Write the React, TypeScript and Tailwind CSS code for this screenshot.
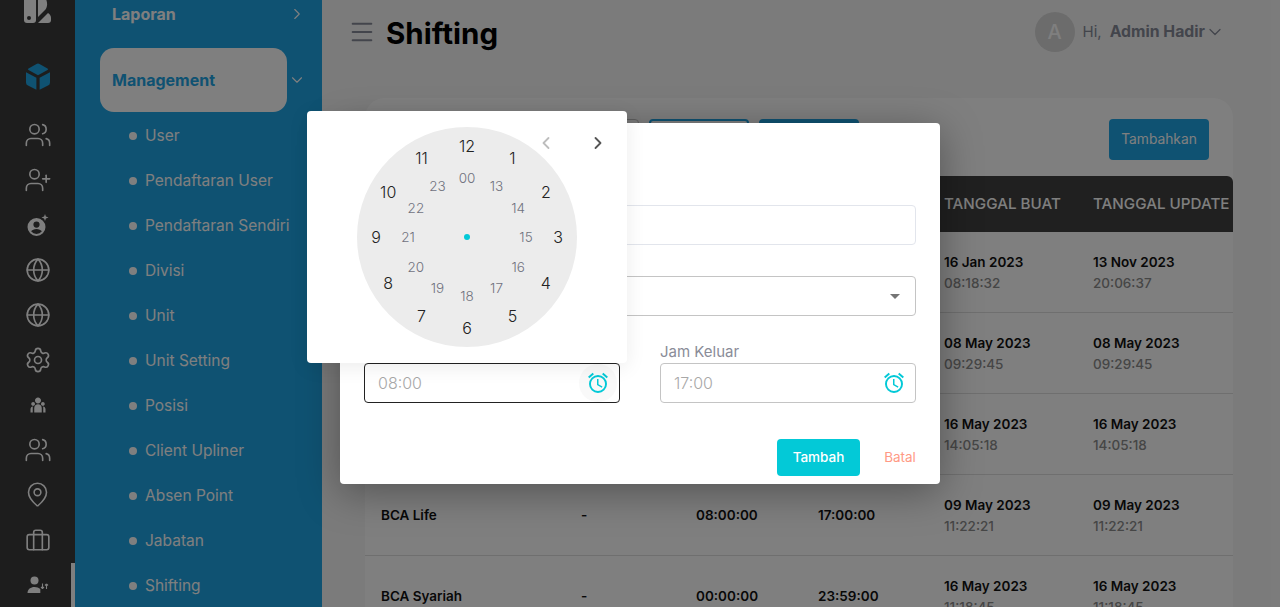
import React from "react";
import { ChevronRight, ChevronDown, ChevronLeft, Users, UserPlus, Globe, Settings, MapPin, Menu } from "lucide-react";
import { RiTeamFill } from "react-icons/ri";
import { MdOutlineAlarm } from "react-icons/md";

const FONT = "font-['Inter','Liberation_Sans',sans-serif]";

const subMenu = ["User", "Pendaftaran User", "Pendaftaran Sendiri", "Divisi", "Unit", "Unit Setting", "Posisi", "Client Upliner", "Absen Point", "Jabatan", "Shifting"];

type Row = { name: string; shift: string; masuk: string; keluar: string; buat: string[]; update: string[] };

const rows: Row[] = [
  { name: "", shift: "", masuk: "", keluar: "", buat: ["16 Jan 2023", "08:18:32"], update: ["13 Nov 2023", "20:06:37"] },
  { name: "", shift: "", masuk: "", keluar: "", buat: ["08 May 2023", "09:29:45"], update: ["08 May 2023", "09:29:45"] },
  { name: "", shift: "", masuk: "", keluar: "", buat: ["16 May 2023", "14:05:18"], update: ["16 May 2023", "14:05:18"] },
  { name: "BCA Life", shift: "-", masuk: "08:00:00", keluar: "17:00:00", buat: ["09 May 2023", "11:22:21"], update: ["09 May 2023", "11:22:21"] },
  { name: "BCA Syariah", shift: "-", masuk: "00:00:00", keluar: "23:59:00", buat: ["16 May 2023", "11:18:45"], update: ["16 May 2023", "11:18:45"] },
];

function Logo() {
  return (
    <svg width="28" height="25" viewBox="0 0 28 25" fill="#ffffff">
      <path d="M0 0h12v21a3 3 0 0 1-3 3H3a3 3 0 0 1-3-3z" />
      <circle cx="5" cy="19" r="2" fill="#3a3a3a" />
      <path d="M14 0l8 0c2 5 1 9-1 11l-7 7z" />
      <path d="M24 14c2 1 3 3 3 5v2a3 3 0 0 1-3 3H14z" />
    </svg>
  );
}

function Cube() {
  return (
    <svg width="26" height="28" viewBox="0 0 26 28" fill="#1ea4e4">
      <path d="M11.5 1a3 3 0 0 1 3 0l8 4.4a1 1 0 0 1 0 1.7L13 12.2 3.5 7.1a1 1 0 0 1 0-1.7z" />
      <path d="M1 9.3l10.4 5.5v12L3 22.6a3.5 3.5 0 0 1-2-3.2z" />
      <path d="M25 9.3L14.6 14.8v12l8.4-4.2a3.5 3.5 0 0 0 2-3.2z" />
    </svg>
  );
}

function UserSpark() {
  return (
    <svg width="24" height="24" viewBox="0 0 24 24" fill="#ffffff">
      <path fillRule="evenodd" d="M10.5 5a9 9 0 1 0 0 18 9 9 0 0 0 0-18zm0 3.5a3.1 3.1 0 1 1 0 6.2 3.1 3.1 0 0 1 0-6.2zm0 12.4a6.9 6.9 0 0 1-5.4-2.6c.7-1.5 3.3-2.4 5.4-2.4s4.700.9 5.4 2.4a6.900 6.900 0 0 1-5.4 2.600z" />
      <path d="M19 1l.9 2.600L22.500 4.500l-2.600.9L19 8l-.9-2.600-2.600-.9 2.600-.9z" />
    </svg>
  );
}

function UserSwap() {
  return (
    <svg width="24" height="24" viewBox="0 0 24 24" fill="#ffffff">
      <circle cx="8.500" cy="7.500" r="4" />
      <path d="M1.500 20c0-3.800 3.200-6 7-6 2.300 0 4.300.7 5.800 2v4z" />
      <path d="M16.500 10.500v5M16.500 15.500l-1.500-1.500M16.500 15.500l1.500-1.500M20.500 16v-5M20.500 11L19 12.500M20.500 11l1.500 1.500" stroke="#ffffff" strokeWidth="1.100" fill="none" />
    </svg>
  );
}

function Suitcase() {
  return (
    <svg width="26" height="26" viewBox="0 0 24 24" fill="none" stroke="#ffffff" strokeWidth="1.500" strokeLinecap="round" strokeLinejoin="round">
      <rect x="2" y="7" width="20" height="14" rx="2" />
      <path d="M8 21V5a2 2 0 0 1 2-2h4a2 2 0 0 1 2 2v16" />
    </svg>
  );
}

function Rail() {
  const icon = "h-[45px] flex items-center justify-center text-white";
  return (
    <div className="relative w-[75px] shrink-0 bg-[#3a3a3a] overflow-hidden">
      <div className="mt-[-1px] h-[25px] overflow-hidden flex justify-center items-end pl-[1px]">
        <Logo />
      </div>
      <div className="h-[28px] mt-[39px] flex justify-center">
        <Cube />
      </div>
      <div className="mt-[21px]">
        <div className={icon}><Users size={28} strokeWidth={1.400} /></div>
        <div className={icon}><UserPlus size={28} strokeWidth={1.400} /></div>
        <div className={icon}><UserSpark /></div>
        <div className={icon}><Globe size={26} strokeWidth={1.500} /></div>
        <div className={icon}><Globe size={26} strokeWidth={1.500} /></div>
        <div className={icon}><Settings size={28} strokeWidth={1.400} /></div>
        <div className={icon}><RiTeamFill size={18} /></div>
        <div className={icon}><Users size={28} strokeWidth={1.400} /></div>
        <div className={icon}><MapPin size={27} strokeWidth={1.400} /></div>
        <div className={icon}><Suitcase /></div>
        <div className={icon}><UserSwap /></div>
      </div>
      {/* scrollbar thumb */}
      <div className="absolute right-0 bottom-0 w-[4px] h-[44px] bg-white" />
    </div>
  );
}

function Sidebar() {
  return (
    <div className="w-[247px] shrink-0 bg-[#1ea4e4] text-white overflow-hidden">
      <div className="h-[27px] flex items-center justify-between pl-[37px] pr-[16px]">
        <span className="text-[16px] font-bold">Laporan</span>
        <ChevronRight size={18} strokeWidth={1.500} />
      </div>
      <div className="mt-[21px] flex items-center pl-[25px] pr-[16px]">
        <div className="w-[187px] h-[64px] pb-[1px] rounded-[14px] bg-white text-[#1ea4e4] flex items-center pl-[12px]">
          <span className="text-[16px] font-bold">Management</span>
        </div>
        <ChevronDown size={18} strokeWidth={1.500} className="ml-auto" />
      </div>
      <div className="mt-[1px]">
        {subMenu.map((item) => (
          <div key={item} className="h-[45px] flex items-center pl-[54px]">
            <span className="w-[8px] h-[8px] rounded-full bg-white" />
            <span className="ml-[8px] text-[15.500px] whitespace-nowrap">{item}</span>
          </div>
        ))}
      </div>
    </div>
  );
}

function Table() {
  const cols = "grid grid-cols-[200px_115px_122px_126px_149px_140px] pl-[16px] items-center";
  return (
    <div className="mt-[16px]">
      <div className={`${cols} h-[56px] bg-[#404040] rounded-t-[6px] text-white text-[15.200px] font-medium whitespace-nowrap`}>
        <span>NAMA</span>
        <span>KODE</span>
        <span>JAM MASUK</span>
        <span>JAM KELUAR</span>
        <span>TANGGAL BUAT</span>
        <span>TANGGAL UPDATE</span>
      </div>
      {rows.map((row) => (
        <div key={row.buat[1] + row.buat[0]} className={`${cols} h-[81px] border-b border-[#dedede] text-[13.500px] font-semibold text-[#111111]`}>
          <span>{row.name}</span>
          <span>{row.shift}</span>
          <span>{row.masuk}</span>
          <span>{row.keluar}</span>
          <div className="pt-[2px] leading-[21px]">
            <div>{row.buat[0]}</div>
            <div className="font-medium text-[#8c8c8c]">{row.buat[1]}</div>
          </div>
          <div className="pt-[2px] leading-[21px]">
            <div>{row.update[0]}</div>
            <div className="font-medium text-[#8c8c8c]">{row.update[1]}</div>
          </div>
        </div>
      ))}
    </div>
  );
}

function Main() {
  return (
    <div className="flex-1 min-w-0 bg-[#f7f7f7] overflow-hidden">
      <header className="h-[64px] pl-[26px] pr-[55px] flex items-center">
        <Menu size={28} strokeWidth={1.700} className="text-[#868a98]" />
        <h1 className="ml-[10px] mt-[2px] text-[29.500px] font-bold text-black">Shifting</h1>
        <div className="ml-auto flex items-center">
          <div className="w-[40px] h-[40px] rounded-full bg-[#d8d8d8] text-white text-[20px] font-medium flex items-center justify-center">A</div>
          <span className="ml-[8px] text-[15px] text-[#868a98]">Hi,</span>
          <span className="ml-[8px] text-[15.800px] font-bold text-[#868a98]">Admin Hadir</span>
          <ChevronDown size={20} strokeWidth={1.500} className="text-[#868a98]" />
        </div>
      </header>
      <div className="ml-[43px] mr-[47px] mt-[34px] bg-white rounded-t-[20px] pt-[21px]">
        <div className="h-[41px] pr-[24px] flex items-stretch justify-end">
          <div className="w-[100px] rounded-[4px] border border-[#c4c4c4] mr-[10px]" />
          <div className="w-[100px] rounded-[4px] border-2 border-[#1ea4e4] mr-[10px]" />
          <div className="w-[100px] rounded-[4px] bg-[#1ea4e4] mr-[250px]" />
          <button className="w-[100px] pb-[1px] rounded-[4px] bg-[#1ea4e4] text-white text-[13.800px]">Tambahkan</button>
        </div>
        <Table />
      </div>
    </div>
  );
}

function ClockFace() {
  const outer = [12, 1, 2, 3, 4, 5, 6, 7, 8, 9, 10, 11];
  const inner = ["00", "13", "14", "15", "16", "17", "18", "19", "20", "21", "22", "23"];
  const place = (i: number, r: number) => {
    const a = (i * Math.PI) / 6;
    return { left: 110 + r * Math.sin(a), top: 110 - r * Math.cos(a) };
  };
  return (
    <div className="relative w-[220px] h-[220px] rounded-full bg-[#ececec]">
      {outer.map((n, i) => (
        <span key={n} style={place(i, 91)} className="absolute -translate-x-1/2 -translate-y-1/2 text-[16px] font-light text-[#222222]">{n}</span>
      ))}
      {inner.map((n, i) => (
        <span key={n} style={place(i, 59)} className="absolute -translate-x-1/2 -translate-y-1/2 text-[13.500px] font-light text-[#70727e]">{n}</span>
      ))}
      <span className="absolute left-[107px] top-[107px] w-[6px] h-[6px] rounded-full bg-[#03c9d7]" />
    </div>
  );
}

function TimeInput({ value, active }: { value: string; active?: boolean }) {
  return (
    <div className={`h-[40px] rounded-[4px] border flex items-center pl-[13px] pr-[2px] text-[16px] font-light text-[#a8a8a8] ${active ? "border-[#222222]" : "border-[#c4c4c4]"}`}>
      <span>{value}</span>
      <span className={`ml-auto w-[38px] h-[38px] rounded-full flex items-center justify-center ${active ? "bg-[#f9f9f9]" : ""}`}>
        <MdOutlineAlarm size={24} className="text-[#03c9d7]" />
      </span>
    </div>
  );
}

function Modal() {
  return (
    <div className="absolute left-[340px] top-[123px] w-[600px] h-[361px] rounded-[4px] bg-white px-[24px] pt-[82px] shadow-[0_8px_40px_rgba(0,0,0,0.35)]">
      <div className="h-[40px] rounded-[4px] border border-[#e2e5ec]" />
      <div className="mt-[31px] h-[40px] rounded-[4px] border border-[#c4c4c4] flex items-center justify-end pr-[15px]">
        <span className="w-0 h-0 border-l-[5px] border-r-[5px] border-t-[5px] border-l-transparent border-r-transparent border-t-[#757575]" />
      </div>
      <div className="mt-[24px] grid grid-cols-2 gap-[40px]">
        <div>
          <div className="h-[23px] text-[15px] leading-[23px] text-[#8a8c98]">Jam Masuk</div>
          <TimeInput value="08:00" active />
        </div>
        <div>
          <div className="h-[23px] text-[15px] leading-[23px] text-[#8a8c98]">Jam Keluar</div>
          <TimeInput value="17:00" />
        </div>
      </div>
      <div className="mt-[36px] flex items-center justify-end">
        <button className="w-[83px] h-[37px] rounded-[4px] bg-[#03c9d7] text-white text-[13.500px] font-medium">Tambah</button>
        <button className="ml-[24px] w-[32px] whitespace-nowrap text-[13.500px] text-[#ff9a85]">Batal</button>
      </div>
    </div>
  );
}

function ClockPopover() {
  return (
    <div className="absolute left-[307px] top-[111px] w-[320px] h-[252px] rounded-[4px] bg-white pl-[50px] pt-[16px] shadow-[0_4px_20px_rgba(0,0,0,0.08)]">
      <ClockFace />
      <ChevronLeft size={20} strokeWidth={2.200} className="absolute left-[229px] top-[22px] text-[#bdbdbd]" />
      <ChevronRight size={20} strokeWidth={2.200} className="absolute left-[281px] top-[22px] text-[#555555]" />
    </div>
  );
}

export default function App() {
  return (
    <div className={`relative flex h-[607px] w-[1280px] overflow-hidden ${FONT}`}>
      <Rail />
      <Sidebar />
      <Main />
      <div className="absolute inset-0 bg-black/50" />
      <Modal />
      <ClockPopover />
    </div>
  );
}
